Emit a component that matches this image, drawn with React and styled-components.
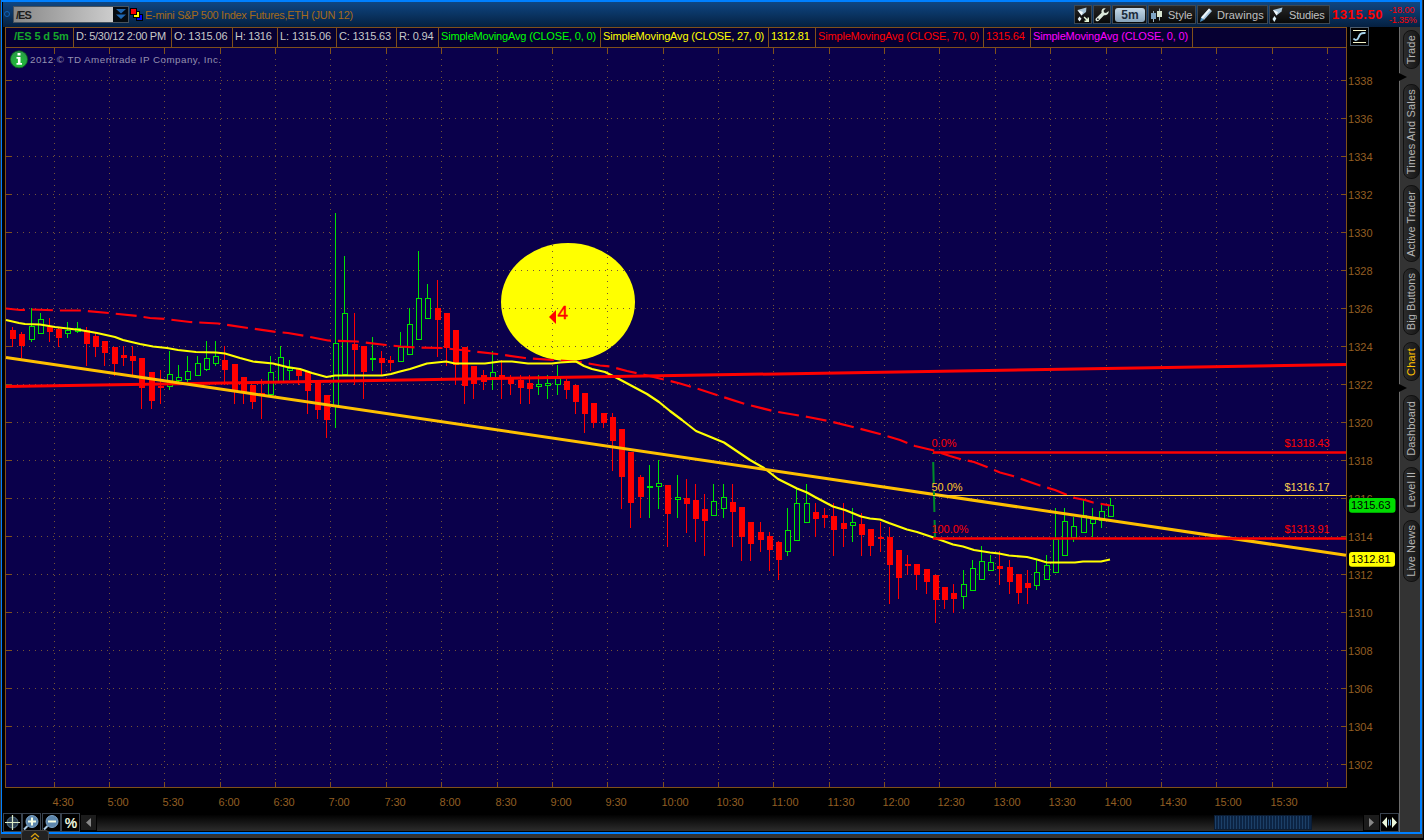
import React, { useLayoutEffect, useRef, useState } from 'react'
import styled, { createGlobalStyle, css } from 'styled-components'

const BROWN = '#80511a'
const AXIS_TEXT = '#925e22'
const BLUE = '#0080ff'
const PLOT = '#0a004b'

// vertical grid lines and their time labels
const times = [
    [54, '4:30'], [109, '5:00'], [164, '5:30'], [220, '6:00'], [275, '6:30'], [330, '7:00'],
    [386, '7:30'], [441, '8:00'], [497, '8:30'], [552, '9:00'], [607, '9:30'], [663, '10:00'],
    [718, '10:30'], [773, '11:00'], [829, '11:30'], [884, '12:00'], [939, '12:30'], [995, '13:00'],
    [1050, '13:30'], [1106, '14:00'], [1161, '14:30'], [1216, '15:00'], [1272, '15:30'], [1327, ''],
]

const prices = Array.from({ length: 19 }, (_, i) => [80 + i * 38, 1338 - i * 2])

// x, high, body top, body bottom, low, up
const candles = [
    [12, 327, 330, 339, 347], [21, 332, 334, 346, 358], [31, 308, 326, 340, 342, 1], [40, 313, 319, 334, 334, 1],
    [49, 318, 327, 332, 342], [58, 327, 329, 338, 347], [67, 322, 330, 334, 338, 1], [77, 322, 328, 332, 333, 1],
    [86, 327, 330, 344, 366], [95, 333, 336, 347, 357], [104, 341, 341, 353, 366], [114, 347, 347, 364, 376],
    [123, 346, 355, 358, 366], [132, 346, 356, 361, 375], [141, 358, 358, 388, 409], [151, 372, 372, 401, 409],
    [160, 370, 386, 388, 404], [169, 351, 374, 387, 390, 1], [178, 365, 377, 381, 382, 1], [187, 356, 371, 380, 382, 1],
    [197, 356, 363, 376, 376, 1], [206, 341, 358, 370, 371, 1], [215, 341, 356, 364, 366, 1], [224, 346, 360, 370, 385],
    [234, 364, 364, 391, 404], [243, 377, 377, 392, 404], [252, 385, 385, 402, 409], [261, 379, 393, 395, 419],
    [270, 356, 372, 395, 395, 1], [280, 346, 357, 383, 383, 1], [289, 360, 368, 371, 380, 1], [298, 368, 369, 376, 385],
    [307, 372, 372, 391, 414], [317, 381, 381, 410, 419], [326, 395, 395, 420, 438], [335, 213, 343, 407, 428, 1],
    [344, 256, 313, 375, 375, 1], [354, 313, 344, 350, 385], [363, 346, 346, 372, 399], [372, 337, 358, 360, 371, 1],
    [381, 351, 358, 363, 375], [390, 356, 360, 363, 371], [400, 332, 347, 362, 362, 1], [409, 308, 324, 355, 355, 1],
    [418, 251, 298, 340, 340, 1], [427, 284, 298, 319, 319, 1], [437, 280, 308, 320, 357], [446, 313, 313, 348, 366],
    [455, 330, 330, 365, 385], [464, 347, 347, 386, 404], [473, 366, 366, 384, 399], [483, 370, 375, 382, 390],
    [492, 351, 372, 378, 390, 1], [501, 360, 375, 378, 399], [510, 375, 378, 384, 395], [520, 375, 380, 388, 404],
    [529, 375, 383, 389, 404], [538, 375, 384, 387, 395, 1], [547, 375, 383, 386, 399, 1], [557, 365, 378, 385, 395, 1],
    [566, 379, 381, 390, 399], [575, 385, 385, 402, 414], [584, 393, 393, 414, 433], [593, 403, 403, 423, 428],
    [603, 413, 413, 423, 428], [612, 413, 417, 441, 471], [621, 429, 429, 477, 509], [630, 452, 452, 503, 528],
    [640, 475, 477, 497, 518], [649, 465, 486, 488, 518, 1], [658, 460, 483, 487, 509, 1], [667, 485, 485, 514, 547],
    [677, 475, 497, 500, 518, 1], [686, 479, 498, 504, 533], [695, 484, 500, 519, 542], [704, 494, 509, 521, 556],
    [713, 484, 501, 516, 516, 1], [723, 484, 497, 509, 518, 1], [732, 484, 502, 512, 547], [741, 507, 507, 537, 561],
    [750, 522, 522, 544, 561], [760, 522, 532, 540, 552], [769, 532, 536, 550, 571], [778, 541, 542, 560, 580],
    [787, 508, 530, 552, 556, 1], [796, 488, 503, 541, 541, 1], [806, 484, 503, 523, 523, 1], [815, 503, 512, 519, 537],
    [824, 508, 515, 518, 528], [833, 503, 516, 530, 556], [843, 503, 523, 529, 547], [852, 508, 522, 526, 542, 1],
    [861, 513, 524, 535, 556], [870, 529, 529, 546, 556], [880, 522, 537, 539, 552], [889, 527, 537, 565, 604],
    [898, 550, 550, 578, 599], [907, 555, 564, 566, 575], [916, 564, 564, 575, 590], [926, 569, 569, 582, 594],
    [935, 575, 575, 600, 623], [944, 587, 587, 600, 609], [953, 584, 593, 599, 613], [963, 570, 584, 597, 609, 1],
    [972, 560, 568, 591, 591, 1], [981, 546, 561, 580, 580, 1], [990, 555, 562, 571, 571, 1], [999, 551, 566, 569, 585],
    [1009, 560, 567, 582, 594], [1018, 574, 574, 593, 604], [1027, 570, 583, 588, 604], [1036, 560, 572, 586, 590, 1],
    [1046, 555, 565, 580, 580, 1], [1055, 508, 539, 573, 573, 1], [1064, 508, 521, 556, 556, 1], [1073, 517, 526, 538, 542, 1],
    [1083, 499, 515, 533, 533, 1], [1092, 508, 519, 524, 537, 1], [1101, 503, 511, 521, 528, 1], [1110, 498, 505, 517, 517, 1],
]

const sma27 = '6,320 19,323 25,324 40,324.5 55,327 80,330 97,333 115,337 123,340 140,344 153,346.5 167,348 178,350 196,352 216,352.5 225,353.5 240,358 253,361.5 273,363.5 287,367 300,369 312,373 326.5,377 335,375.5 382,375.5 391,374 400,371.5 410,369 427,363.5 446,361.5 455,363.5 485,363.5 500,361.5 512,361.5 528,363.5 552,363.5 560,362.5 576,361.5 584,366 592,369 605,372 617,378 632,386 647,394 659,402 670,411 682,420 696,431 724,442.5 750,460 764,468 778,479 797,488.5 807,492.5 815,497 833,506.5 845,510 861,516.5 870,518.5 880,519.5 889,523 907,529.5 917,532 935,538 953,544.5 963,546.5 974,550 990,552.5 999,553.5 1009,555.5 1027,557 1037,559.5 1047,562.5 1075,562.5 1083,561.5 1101,561.5 1110,559.5'
const sma70 = '6,308.5 20,310 32,309.5 60,310.5 81,310.5 109,313 137,316 150,318 165,319 190,322 218,323.5 248,328 277,332 288,333 305,336 328,340.5 357,341.5 386,345 401,346.5 415,347.5 443,348 470,351 497,354 525,358 554,360 580,362 600,365.5 610,366.5 627,371 645,375 666,380 680,383.5 700,389.5 720,396 745,404 775,411.5 808,417 833,422 853,427 880,434 900,440 915,446 934,450.5 950,456 960,459 974,462 987,467 1000,472.5 1013,476 1027,481 1040,485.5 1055,490 1066,494.5 1075,498 1085,500 1093,502.5 1102,504 1110,505.5'

// right border x of each cell is the running sum of the widths
const infoCells = [
    { w: 68, pad: 8, len: 55, text: '/ES 5 d 5m', color: '#16a82c', bold: true },
    { w: 98, len: 90, text: 'D: 5/30/12 2:00 PM' },
    { w: 61, len: 53, text: 'O: 1315.06' },
    { w: 45, len: 37, text: 'H: 1316' },
    { w: 59, len: 51, text: 'L: 1315.06' },
    { w: 60, len: 52, text: 'C: 1315.63' },
    { w: 42, len: 34, text: 'R: 0.94' },
    { w: 162, len: 155, text: 'SimpleMovingAvg (CLOSE, 0, 0)', color: '#00ff00' },
    { w: 168, len: 161, text: 'SimpleMovingAvg (CLOSE, 27, 0)', color: '#ffff00' },
    { w: 47, len: 39, text: '1312.81', color: '#ffff00' },
    { w: 168, len: 161, text: 'SimpleMovingAvg (CLOSE, 70, 0)', color: '#ff0000' },
    { w: 47, len: 39, text: '1315.64', color: '#ff0000' },
    { w: 162, len: 155, text: 'SimpleMovingAvg (CLOSE, 0, 0)', color: '#ff00ff' },
]

const sideTabs = [
    { h: 39, len: 29, text: 'Trade' },
    { notch: true },
    { h: 95, len: 85, text: 'Times And Sales' },
    { gap: 6 },
    { h: 77, len: 66, text: 'Active Trader' },
    { gap: 6 },
    { h: 67, len: 57, text: 'Big Buttons' },
    { gap: 7 },
    { h: 39, len: 28, text: 'Chart', active: true },
    { notch: true, short: true },
    { h: 66, len: 55, text: 'Dashboard' },
    { gap: 6 },
    { h: 46, len: 35, text: 'Level II' },
    { gap: 7 },
    { h: 62, len: 52, text: 'Live News' },
]

// spreads a run of text over a fixed length by its letter spacing
function Fit({ len, children }) {
    const ref = useRef(null)
    const [spacing, setSpacing] = useState(0)
    useLayoutEffect(() => {
        const box = ref.current
        const natural = Math.max(box.offsetWidth, box.offsetHeight)
        setSpacing((len - natural) / children.length)
    }, [len, children])
    return <FitSpan ref={ref} style={{ letterSpacing: spacing }}>{children}</FitSpan>
}

function Label({ x, y, len, fill, size = 11, children }) {
    return <text x={x} y={y} fill={fill} fontSize={size} textLength={len}>{children}</text>
}

function Candle({ data }) {
    const [x, high, top, bottom, low, up] = data
    const color = up ? '#00e400' : '#ff0000'
    return (
        <g fill={color}>
            {top > high && <rect x={x} y={high} width="1" height={top - high} />}
            {low > bottom && <rect x={x} y={bottom} width="1" height={low - bottom} />}
            <rect x={x - 2} y={top} width="6" height={bottom - top} />
            {up && bottom - top > 2 && <rect x={x - 1} y={top + 1} width="4" height={bottom - top - 2} fill={PLOT} />}
        </g>
    )
}

function Chart() {
    return (
        <ChartSvg viewBox="2 47 1397 766">
            <rect x="5" y="47" width="1342" height="741" fill={BROWN} />
            <rect x="6" y="48" width="1340" height="739" fill={PLOT} />

            <ellipse cx="568" cy="302" rx="67" ry="59" fill="#ffff00" />

            <g stroke="#745436" strokeDasharray="1 5" shapeRendering="crispEdges">
                {prices.map(([y]) => <line key={y} x1="17" x2="1338" y1={y + 0.5} y2={y + 0.5} />)}
                {times.map(([x]) => <line key={x} x1={x + 0.5} x2={x + 0.5} y1="59" y2="780" />)}
            </g>
            <g fill={BROWN}>
                {prices.map(([y]) => <rect key={y} x="6" y={y} width="6" height="1" />)}
                {prices.map(([y]) => <rect key={y} x="1341" y={y} width="6" height="1" />)}
                {times.map(([x]) => <rect key={x} x={x} y="48" width="1" height="6" />)}
                {times.map(([x]) => <rect key={x} x={x} y="782" width="1" height="6" />)}
            </g>

            <g shapeRendering="crispEdges">
                {candles.map(c => <Candle key={c[0]} data={c} />)}
            </g>

            <g fill="none" strokeLinejoin="round">
                <polyline points={sma70} stroke="#ff0008" strokeWidth="2.2" strokeDasharray="21 7" strokeDashoffset="2" />
                <polyline points={sma27} stroke="#ffff00" strokeWidth="2.2" />
                <line x1="6" y1="386.5" x2="1346" y2="364.6" stroke="#ff0000" strokeWidth="3" />
                <line x1="6" y1="357.4" x2="1346" y2="555.3" stroke="#ffc000" strokeWidth="3" />
                <line x1="933" y1="453" x2="935" y2="538" stroke="#008c28" strokeWidth="2" strokeDasharray="21 8" strokeDashoffset="20" />
                <line x1="933" y1="452.5" x2="1346" y2="452.5" stroke="#ff0000" strokeWidth="2.4" />
                <line x1="933" y1="495.5" x2="1346" y2="495.5" stroke="#ffd030" />
                <line x1="933" y1="538.5" x2="1346" y2="538.5" stroke="#ff0000" strokeWidth="2.4" />
            </g>

            <Label x={931.5} y={447} len={25} fill="#ff0000">0.0%</Label>
            <Label x={931.5} y={491} len={31} fill="#ffc828">50.0%</Label>
            <Label x={931.5} y={533} len={37} fill="#ff0000">100.0%</Label>
            <Label x={1284.5} y={447} len={45} fill="#ff0000">$1318.43</Label>
            <Label x={1284.5} y={491} len={45} fill="#ffd050">$1316.17</Label>
            <Label x={1284.5} y={533} len={45} fill="#ff0000">$1313.91</Label>

            <path d="M549 317L556 310V324Z" fill="#ff0000" />
            <text x="557.5" y="318.5" fill="#ff0000" stroke="#ff0000" strokeWidth="0.4" fontSize="19">4</text>

            <circle cx="19" cy="59.3" r="8.6" fill="url(#info)" stroke="#0c5c1c" strokeWidth="0.8" />
            <path d="M17.5 53h3v2.4h-3zM16.5 57h4v6h1.5v1.8h-5.5V63h1.4v-4.2h-1.4z" fill="#fff" />
            <defs>
                <radialGradient id="info" cx="50%" cy="70%" r="65%">
                    <stop offset="0" stopColor="#1cc034" />
                    <stop offset="1" stopColor="#2a9a48" />
                </radialGradient>
            </defs>
            <Label x={30} y={63} len={191} size={9.8} fill="#9490b0">2012 © TD Ameritrade IP Company, Inc.</Label>

            {prices.map(([y, p]) => <Label key={p} x={1348} y={y + 5} len={24.5} fill={AXIS_TEXT}>{p}</Label>)}
            {times.map(([x, t]) => t && (
                <Label key={t} x={x - 1.5} y={806} len={t.length === 4 ? 21 : 27} fill={AXIS_TEXT}>{t}</Label>
            ))}

            <rect x="1349" y="498" width="46.5" height="14.7" rx="3" fill="#00dc00" />
            <Label x={1351} y={509} len={39.5} fill="#000">1315.63</Label>
            <rect x="1349" y="552" width="46" height="14.7" rx="3" fill="#ffff00" />
            <Label x={1351} y={563} len={39.5} fill="#000">1312.81</Label>
        </ChartSvg>
    )
}

function Header() {
    return (
        <HeaderBar>
            <Ring />
            <SymbolBox>
                <SymbolInput><Fit len={15}>/ES</Fit></SymbolInput>
                <SymbolDrop>
                    <svg width="14" height="14" viewBox="0 0 14 14">
                        <path d="M2 2h10L7 6.5zM2 7.5h10L7 12z" fill="#1f66b0" />
                    </svg>
                </SymbolDrop>
            </SymbolBox>
            <LinkIcon width="14" height="14" viewBox="0 0 14 14">
                <rect x="6.5" y="6.5" width="6" height="6" fill="#0000ff" stroke="#000" />
                <rect x="3.5" y="3.5" width="6" height="6" fill="#ffff00" stroke="#000" />
                <rect x="0.5" y="0.5" width="6" height="6" fill="#ff0000" stroke="#000" />
            </LinkIcon>
            <Title><Fit len={208}>E-mini S&P 500 Index Futures,ETH (JUN 12)</Fit></Title>
            <Tools>
                <ToolButton $w={18}>
                    <svg width="16" height="16" viewBox="0 0 16 16">
                        <path d="M2.5 3L11.5 0.500L11 5L6.500 8.500Z" fill="#a8c4d8" />
                        <path d="M2.5 3L6.500 8.500L8 5Z" fill="#f4fafc" />
                        <path d="M4.500 9.500l2 2.300-2 2.700-1.800-2.600z" fill="#e4eef4" />
                        <path d="M9.500 9.500l3 2.800V10.500H14v4.500H9.500v-1.400h1.900L8.600 10.500z" fill="#e4f4d8" />
                    </svg>
                </ToolButton>
                <ToolButton $w={18}>
                    <svg width="16" height="16" viewBox="0 0 16 16">
                        <path d="M9.6 1.2c-2 .8-2.5 2.800-2 4.600L2 11.200c-1.600 1.800.7 4.300 2.700 2.600l5.300-5.600c2 .5 3.900-.5 4.600-2.600l.1-1.500-2.700 1.900-2-.6-.4-2L11.800 1.200z" fill="#dce8dc" />
                        <circle cx="3.9" cy="12.2" r="0.9" fill="#1a2028" />
                    </svg>
                </ToolButton>
                <ToolButton $w={35}><Period><b>5</b>m</Period></ToolButton>
                <ToolButton $w={48}>
                    <svg width="16" height="16" viewBox="0 0 16 16">
                        <path d="M4.5 4v11M10.5 1.500v12" stroke="#9ab0c0" />
                        <rect x="2" y="6" width="5" height="6" fill="#7fa4c4" />
                        <rect x="8" y="4" width="5" height="6" fill="#d8e4d0" />
                    </svg>
                    <ToolText><Fit len={24}>Style</Fit></ToolText>
                </ToolButton>
                <ToolButton $w={71}>
                    <svg width="16" height="16" viewBox="0 0 16 16">
                        <path d="M11 1.5l3 2.5L6 13l-3-2.5z" fill="#a9c8e0" />
                        <path d="M11 1.5l1.5 1.2L4.5 12L3 10.5z" fill="#eef6fa" />
                        <path d="M3 10.5L6 13l-4 2z" fill="#4a8ec0" />
                    </svg>
                    <ToolText><Fit len={47}>Drawings</Fit></ToolText>
                </ToolButton>
                <ToolButton $w={61}>
                    <svg width="16" height="16" viewBox="0 0 16 16">
                        <path d="M3 3L12.5 0.5L11.5 4.5L6.5 8.500Z" fill="#a8c4d8" />
                        <path d="M3 3L6.500 8.500L8 5Z" fill="#f4fafc" />
                        <path d="M4.500 9l1.800 2.500-2 3.500-1.800-3z" fill="#dcf0f8" />
                    </svg>
                    <ToolText><Fit len={36}>Studies</Fit></ToolText>
                </ToolButton>
            </Tools>
            <LastPrice><Fit len={51}>1315.50</Fit></LastPrice>
            <Change>
                <div><Fit len={26}>-18.00</Fit></div>
                <div><Fit len={28}>-1.35%</Fit></div>
            </Change>
        </HeaderBar>
    )
}

function InfoRow() {
    return (
        <InfoLine>
            <Cells>
                {infoCells.map((c, i) => (
                    <Cell key={i} $w={c.w} $pad={c.pad} $color={c.color} $bold={c.bold}>
                        <Fit len={c.len}>{c.text}</Fit>
                    </Cell>
                ))}
            </Cells>
            <CurveButton>
                <svg width="17" height="17" viewBox="0 0 17 17">
                    <path d="M2 2.5h13M2 14.5h13" stroke="#f4f4c8" />
                    <path d="M2.500 10.500C4 12.500 6.500 12.500 7.500 9.500S9.500 4.500 14.500 5" fill="none" stroke="#a8d4ec" strokeWidth="2" />
                </svg>
            </CurveButton>
        </InfoLine>
    )
}

function SideBar() {
    return (
        <Side>
            {sideTabs.map((t, i) => {
                if (t.notch) return <Notch key={i} $short={t.short} />
                if (t.gap) return <Gap key={i} $h={t.gap} />
                return <SideTab key={i} $h={t.h} $active={t.active}><Fit len={t.len}>{t.text}</Fit></SideTab>
            })}
        </Side>
    )
}

function BottomBar() {
    return (
        <Bottom>
            <IconButton>
                <svg width="17" height="17" viewBox="0 0 17 17">
                    <circle cx="8.5" cy="8.5" r="5.5" fill="#2c4050" stroke="#56748c" />
                    <path d="M8.5 1v15M1 8.5h15" stroke="#dcecc8" strokeWidth="1.2" />
                </svg>
            </IconButton>
            <IconButton>
                <svg width="17" height="17" viewBox="0 0 17 17">
                    <path d="M1 15.5l3.5-3.5" stroke="#a8c8e0" strokeWidth="2" />
                    <circle cx="9" cy="7.5" r="6" fill="#5c86ac" stroke="#7ca4c8" />
                    <path d="M9 3.5v8M5 7.5h8" stroke="#f4fce4" strokeWidth="2" />
                </svg>
            </IconButton>
            <IconButton>
                <svg width="17" height="17" viewBox="0 0 17 17">
                    <path d="M1 15.5l3.5-3.5" stroke="#a8c8e0" strokeWidth="2" />
                    <circle cx="9" cy="7.5" r="6" fill="#5c86ac" stroke="#7ca4c8" />
                    <path d="M5 7.5h8" stroke="#f4fce4" strokeWidth="2" />
                </svg>
            </IconButton>
            <IconButton><Percent>%</Percent></IconButton>
            <Arrow>
                <svg width="5" height="9" viewBox="0 0 5 9"><path d="M5 0v9L0 4.5z" fill="#888" /></svg>
            </Arrow>
            <Track><Thumb /></Track>
            <Arrow>
                <svg width="5" height="9" viewBox="0 0 5 9"><path d="M0 0v9L5 4.5z" fill="#888" /></svg>
            </Arrow>
            <IconButton>
                <svg width="17" height="17" viewBox="0 0 17 17">
                    <path d="M6 3v11L1 8.5zM11 3v11L16 8.5z" fill="#ecf8dc" />
                    <path d="M7.5 5.5v6M9.5 5.5v6" stroke="#6ea4d4" />
                </svg>
            </IconButton>
        </Bottom>
    )
}

export default function App() {
    return (
        <Frame>
            <GlobalStyle />
            <Window>
                <Header />
                <Body>
                    <Main>
                        <InfoRow />
                        <Chart />
                        <BottomBar />
                    </Main>
                    <SideBar />
                </Body>
            </Window>
            <Sill />
            <PullTab>
                <svg width="10" height="8" viewBox="0 0 10 8">
                    <path d="M1 4l4-3.5L9 4M1 8l4-3.5L9 8" fill="none" stroke="#d8a010" strokeWidth="1.3" />
                </svg>
            </PullTab>
        </Frame>
    )
}

const GlobalStyle = createGlobalStyle`
    body{
        margin:0;
        background:#000;
        overflow:hidden;
        font-family:"Liberation Sans", Arial, sans-serif;
        font-size:11px;
    }
    svg{
        display:block;
        flex:none;
    }
`
const Frame = styled.div`
    position:relative;
    box-sizing:border-box;
    width:1424px;
    height:840px;
    background:#000;
    border-left:1px solid #333;
`
const Window = styled.div`
    box-sizing:border-box;
    width:1421px;
    height:834px;
    border:2px solid ${BLUE};
    border-left-width:1px;
    box-shadow:1px 0 0 #333;
`
const Sill = styled.div`
    height:4px;
    width:1422px;
    background:#333;
`
const PullTab = styled.div`
    position:absolute;
    left:20px;
    top:830px;
    width:28px;
    height:10px;
    box-sizing:border-box;
    padding-top:2px;
    display:flex;
    justify-content:center;
    background:#222;
    border:1px solid #444;
    border-bottom:0;
    border-radius:4px 4px 0 0;
`
const FitSpan = styled.span`
    display:inline-block;
    white-space:pre;
`
const HeaderBar = styled.div`
    display:flex;
    height:25px;
    margin-left:1px;
    background:linear-gradient(#0f4682, #0a3462 50%, #052040);
`
const Ring = styled.div`
    box-sizing:border-box;
    width:6px;
    height:6px;
    margin:9px 3px 0 1px;
    border:1.5px solid #0f62b8;
    border-radius:50%;
`
const SymbolBox = styled.div`
    box-sizing:border-box;
    display:flex;
    width:116px;
    height:17px;
    margin-top:4px;
    border:1px solid #46525e;
    background:#050a10;
`
const SymbolInput = styled.div`
    width:99px;
    padding-left:2px;
    line-height:16px;
    font-weight:bold;
    color:#1c1c1c;
    background:linear-gradient(90deg, #888, #ccc);
`
const SymbolDrop = styled.div`
    display:flex;
    margin-left:1px;
`
const LinkIcon = styled.svg`
    margin:6px 0 0 1px;
`
const Title = styled.div`
    width:929px;
    margin-left:1px;
    line-height:26px;
    color:#a56a1a;
`
const Tools = styled.div`
    display:flex;
    gap:1px;
    margin-top:3px;
`
const ToolButton = styled.div`
    box-sizing:border-box;
    display:flex;
    align-items:center;
    justify-content:flex-start;
    width:${p => p.$w}px;
    height:19px;
    border:1px solid #3c4854;
    background:linear-gradient(#262626, #080808);
`
const ToolText = styled.div`
    margin-left:3px;
    color:#c0c0c0;
`
const Period = styled.div`
    width:30px;
    height:14px;
    margin-left:2px;
    border-radius:3px;
    background:linear-gradient(#c4d8e8, #88a4bc);
    color:#1c2c3c;
    font-size:12px;
    font-weight:bold;
    line-height:15px;
    text-align:center;
`
const LastPrice = styled.div`
    margin-left:2px;
    width:56px;
    font-size:13px;
    font-weight:bold;
    line-height:26px;
    color:#ff0000;
`
const Change = styled.div`
    margin-left:1px;
    padding-top:3px;
    font-size:9px;
    line-height:10px;
    color:#ff0000;
    white-space:nowrap;
`
const Body = styled.div`
    display:flex;
    height:805px;
`
const Main = styled.div`
    display:flex;
    flex-direction:column;
    width:1397px;
    background:#000;
`
const InfoLine = styled.div`
    display:flex;
    height:20px;
    padding-left:3px;
`
const Cells = styled.div`
    box-sizing:border-box;
    display:flex;
    width:1342px;
    height:20px;
    border:1px solid ${BROWN};
    border-bottom:0;
    background:#060032;
`
const Cell = styled.div`
    box-sizing:border-box;
    flex:none;
    width:${p => p.$w}px;
    padding-left:${p => p.$pad || 2}px;
    border-right:1px solid ${BROWN};
    line-height:17px;
    color:${p => p.$color || '#c8c8c8'};
    font-weight:${p => p.$bold ? 'bold' : 'normal'};
`
const CurveButton = styled.div`
    box-sizing:border-box;
    width:19px;
    height:19px;
    margin-left:3px;
    border:1px solid #4c5c6c;
`
const ChartSvg = styled.svg`
    width:1397px;
    height:766px;
`
const Side = styled.div`
    box-sizing:border-box;
    width:21px;
    padding:3px 0 0 3px;
    border-left:1px solid #6c6c6c;
    background:#333;
`
const SideTab = styled.div`
    box-sizing:border-box;
    display:flex;
    align-items:center;
    justify-content:center;
    width:17px;
    height:${p => p.$h}px;
    padding-right:2px;
    border:1px solid #111;
    border-radius:8px;
    background:linear-gradient(90deg, #2c2c2c, #161616);
    color:#b4b4b4;
    ${FitSpan}{
        writing-mode:vertical-rl;
        transform:rotate(180deg);
    }
    ${p => p.$active && css`
        color:#ffc000;
    `}
`
const Gap = styled.div`
    height:${p => p.$h}px;
`
const Notch = styled.div`
    height:8px;
    width:8px;
    margin:${p => p.$short ? '3px 0 3px -4px' : '4px 0 3px -4px'};
    background:#000;
    clip-path:polygon(0 0, 100% 50%, 0 100%);
`
const Bottom = styled.div`
    display:flex;
    height:19px;
    padding-left:1px;
`
const IconButton = styled.div`
    box-sizing:border-box;
    flex:none;
    width:19px;
    height:19px;
    border:1px solid #38424e;
    margin-right:0.3px;
    background:#000;
`
const Percent = styled.div`
    color:#ecf4dc;
    font-size:14px;
    font-weight:bold;
    line-height:18px;
    text-align:center;
    margin-left:1px;
`
const Arrow = styled.div`
    flex:none;
    display:flex;
    align-items:center;
    justify-content:center;
    width:15px;
    height:15px;
    margin:2px 1px 0 1px;
    background:#1c1c1c;
`
const Track = styled.div`
    flex:1;
    display:flex;
    justify-content:flex-end;
    height:16px;
    margin-top:2px;
    background:linear-gradient(#020202, #2c2c2c);
`
const Thumb = styled.div`
    box-sizing:border-box;
    width:98px;
    height:15px;
    margin-right:51px;
    border:1px solid #0a1c34;
    background:repeating-linear-gradient(90deg, #1c4068 0 1px, #0c2444 1px 3px);
`
